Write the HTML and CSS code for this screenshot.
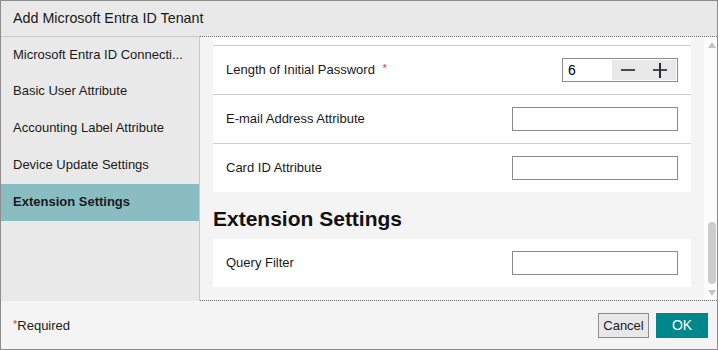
FILE: index.html
```html
<!DOCTYPE html>
<html lang="en">
<head>
    <meta charset="UTF-8">
    <meta name="viewport" content="width=device-width, initial-scale=1.0">
    <title>Add Microsoft Entra ID Tenant</title>
    <link rel="stylesheet" href="styles.css">
</head>
<body>

<div class="dialog">
    <div class="dialog-title">Add Microsoft Entra ID Tenant</div>

    <div class="dialog-body">
        <!-- Left menu -->
        <div class="nav">
            <div class="nav-item">Microsoft Entra ID Connecti...</div>
            <div class="nav-item">Basic User Attribute</div>
            <div class="nav-item">Accounting Label Attribute</div>
            <div class="nav-item">Device Update Settings</div>
            <div class="nav-item active">Extension Settings</div>
        </div>

        <!-- Settings area -->
        <div class="panel">
            <div class="panel-scroll">
                <div class="card">
                    <div class="row row-stub"></div>
                    <div class="row">
                        <span class="label">Length of Initial Password <span class="req">*</span></span>
                        <div class="spin">
                            <input type="text" class="spin-value" value="6">
                            <div class="spin-buttons">
                                <span class="spin-btn minus"></span>
                                <span class="spin-btn plus"></span>
                            </div>
                        </div>
                    </div>
                    <div class="row">
                        <span class="label">E-mail Address Attribute</span>
                        <input type="text" class="field">
                    </div>
                    <div class="row">
                        <span class="label">Card ID Attribute</span>
                        <input type="text" class="field">
                    </div>
                </div>

                <h2 class="section-title">Extension Settings</h2>

                <div class="card">
                    <div class="row">
                        <span class="label">Query Filter</span>
                        <input type="text" class="field">
                    </div>
                </div>
            </div>

            <!-- Scrollbar -->
            <div class="scrollbar">
                <span class="arrow up"></span>
                <span class="thumb"></span>
                <span class="arrow down"></span>
            </div>
        </div>
    </div>

    <div class="dialog-footer">
        <span class="required-note"><span class="req">*</span>Required</span>
        <div class="actions">
            <button class="btn btn-cancel">Cancel</button>
            <button class="btn btn-ok">OK</button>
        </div>
    </div>
</div>

</body>
</html>
```

FILE: styles.css
```css
body {
    margin: 0;
    font-family: "Liberation Sans", Arial, sans-serif;
    font-size: 13px;
    color: #1a1a1a;
    background-color: #ffffff;
}
.dialog {
    width: 718px;
    height: 350px;
    box-sizing: border-box;
    border: 1px solid #8c8c8c;
    background-color: #f4f4f4;
    display: flex;
    flex-direction: column;
}
.dialog-title {
    height: 35px;
    line-height: 35px;
    padding-left: 12px;
    font-size: 14.3px;
    background-color: #e9e9e9;
    color: #1a1a1a;
}
.dialog-body {
    display: flex;
    height: 265px;
}
/* Left menu */
.nav {
    width: 198px;
    background-color: #e9e9e9;
    border-top: 1px solid #c9c9c9;
    border-right: 1px solid #c9c9c9;
}
.nav-item {
    height: 37px;
    line-height: 36px;
    padding-left: 12px;
    white-space: nowrap;
}
.nav-item:first-child {
    height: 36px;
    line-height: 36px;
}
.nav-item.active {
    background-color: #8abdc2;
    font-weight: bold;
}
/* Settings area */
.panel {
    flex: 1;
    display: flex;
    border-top: 1px dotted #6a6a6a;
    border-bottom: 1px dotted #6a6a6a;
    overflow: hidden;
}
.panel-scroll {
    flex: 1;
    padding: 0 13px;
    background-color: #f4f4f4;
}
.card {
    background-color: #ffffff;
}
.row {
    height: 48px;
    padding: 0 13px;
    display: flex;
    align-items: center;
    justify-content: space-between;
    border-top: 1px solid #cfcfcf;
}
.card .row:first-child {
    border-top: none;
}
.row-stub {
    height: 8px;
}
.label {
    margin-top: -1px;
}
.req {
    color: #d0443e;
    font-size: 11px;
    vertical-align: 2px;
}
.label .req {
    margin-left: 4px;
}
.field {
    width: 166px;
    height: 24px;
    box-sizing: border-box;
    border: 1px solid #8c8c8c;
    margin: 0;
    padding: 0 5px;
    font-family: inherit;
    font-size: 13px;
    background-color: #ffffff;
}
.spin {
    width: 116px;
    height: 24px;
    box-sizing: border-box;
    border: 1px solid #8c8c8c;
    display: flex;
    padding: 1px;
    background-color: #ffffff;
}
.spin-value {
    width: 44px;
    border: none;
    padding: 0 0 0 4px;
    margin: 0;
    font-family: inherit;
    font-size: 14px;
    background: transparent;
}
.spin-buttons {
    flex: 1;
    display: flex;
    background-color: #e8e8e8;
}
.spin-btn {
    flex: 1;
    position: relative;
}
.spin-btn::before,
.spin-btn.plus::after {
    content: "";
    position: absolute;
    left: 50%;
    top: 50%;
    width: 14px;
    height: 2px;
    margin: -1px 0 0 -7px;
    background-color: #4a4a4a;
}
.spin-btn.plus::after {
    width: 2px;
    height: 15px;
    margin: -7px 0 0 -1px;
    background-color: #2a2a3a;
}
.section-title {
    margin: 0;
    padding: 15px 0 8px;
    height: 24px;
    line-height: 24px;
    font-size: 21px;
    font-weight: bold;
    color: #111111;
}
/* Scrollbar */
.scrollbar {
    width: 12px;
    background-color: #fcfcfc;
    display: flex;
    flex-direction: column;
    align-items: flex-end;
    padding-right: 1px;
}
.arrow {
    width: 0;
    height: 0;
    border-left: 4px solid transparent;
    border-right: 4px solid transparent;
}
.arrow.up {
    margin-top: 5px;
    border-bottom: 6px solid #c4c4c4;
}
.arrow.down {
    margin-top: 6px;
    margin-bottom: 4px;
    border-top: 6px solid #c4c4c4;
}
.thumb {
    width: 8px;
    height: 62px;
    margin-top: auto;
    border-radius: 4px;
    background-color: #cdcdcd;
}
/* Footer */
.dialog-footer {
    flex: 1;
    display: flex;
    align-items: center;
    justify-content: space-between;
    padding: 0 9px 0 12px;
}
.actions {
    display: flex;
    gap: 7px;
}
.btn {
    height: 25px;
    font-family: inherit;
    font-size: 13px;
    padding: 0;
    cursor: pointer;
}
.btn-cancel {
    width: 51px;
    background-color: #e8e8e8;
    border: 1px solid #8c8c8c;
    color: #1a1a1a;
}
.btn-ok {
    width: 52px;
    background-color: #00878c;
    border: none;
    color: #ffffff;
    font-size: 14px;
}
```
